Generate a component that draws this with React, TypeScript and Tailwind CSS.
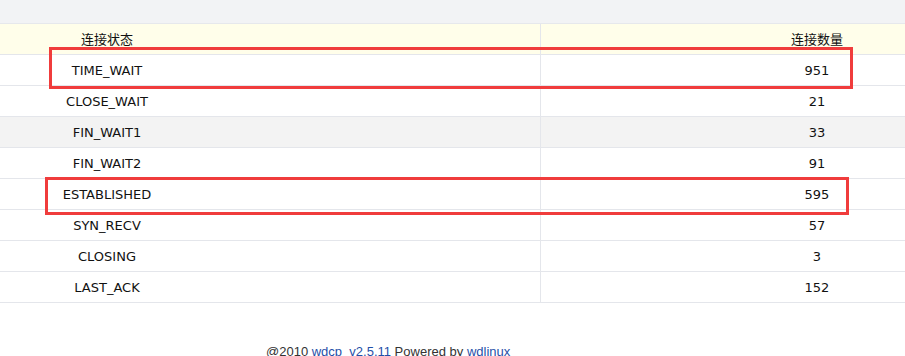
import React from 'react'

const rows = [
  { state: 'TIME_WAIT', count: 951 },
  { state: 'CLOSE_WAIT', count: 21 },
  { state: 'FIN_WAIT1', count: 33 },
  { state: 'FIN_WAIT2', count: 91 },
  { state: 'ESTABLISHED', count: 595 },
  { state: 'SYN_RECV', count: 57 },
  { state: 'CLOSING', count: 3 },
  { state: 'LAST_ACK', count: 152 },
]

export default function App() {
  return (
    <div className="relative h-[356px] w-[905px] overflow-hidden bg-white text-[13px] text-[#111] [font-family:'DejaVu_Sans','Noto_Sans_CJK_SC',sans-serif]">
      {/* top bar */}
      <div className="h-[24px] border-b border-[#e6e8ec] bg-[#f2f3f5]" />

      {/* connection table */}
      <div>
        <div className="flex h-[31px] border-b border-[#e4e6eb] bg-[#fffeea]">
          <div className="flex w-[541px] items-center border-r border-[#e4e6eb] pt-[1px]">
            <span className="w-[214px] text-center">连接状态</span>
          </div>
          <div className="flex flex-1 items-center pt-[1px]">
            <span className="ml-[226px] w-[100px] text-center">连接数量</span>
          </div>
        </div>
        {rows.map((r, i) => (
          <div
            key={r.state}
            className={`flex h-[31px] border-b border-[#e4e6eb] ${i === 2 ? 'bg-[#f3f3f3]' : 'bg-white'}`}
          >
            <div className="flex w-[541px] items-center border-r border-[#e4e6eb] pt-[1px]">
              <span className="w-[214px] text-center">{r.state}</span>
            </div>
            <div className="flex flex-1 items-center pt-[1px]">
              <span className="ml-[226px] w-[100px] text-center">{r.count}</span>
            </div>
          </div>
        ))}
      </div>

      {/* footer */}
      <div className="mt-[39px] pl-[266px] text-[13px] text-[#333] [font-family:'Liberation_Sans',sans-serif]">
        @2010 <span className="text-[#1f4fa8]">wdcp_v2.5.11</span> Powered by{' '}
        <span className="text-[#1f4fa8]">wdlinux</span>
      </div>

      {/* highlight boxes */}
      <div className="absolute left-[49px] top-[47px] h-[42px] w-[804px] border-[3px] border-[#f03c3c]" />
      <div className="absolute left-[45px] top-[177px] h-[38px] w-[804px] border-[3px] border-[#f03c3c]" />
    </div>
  )
}
